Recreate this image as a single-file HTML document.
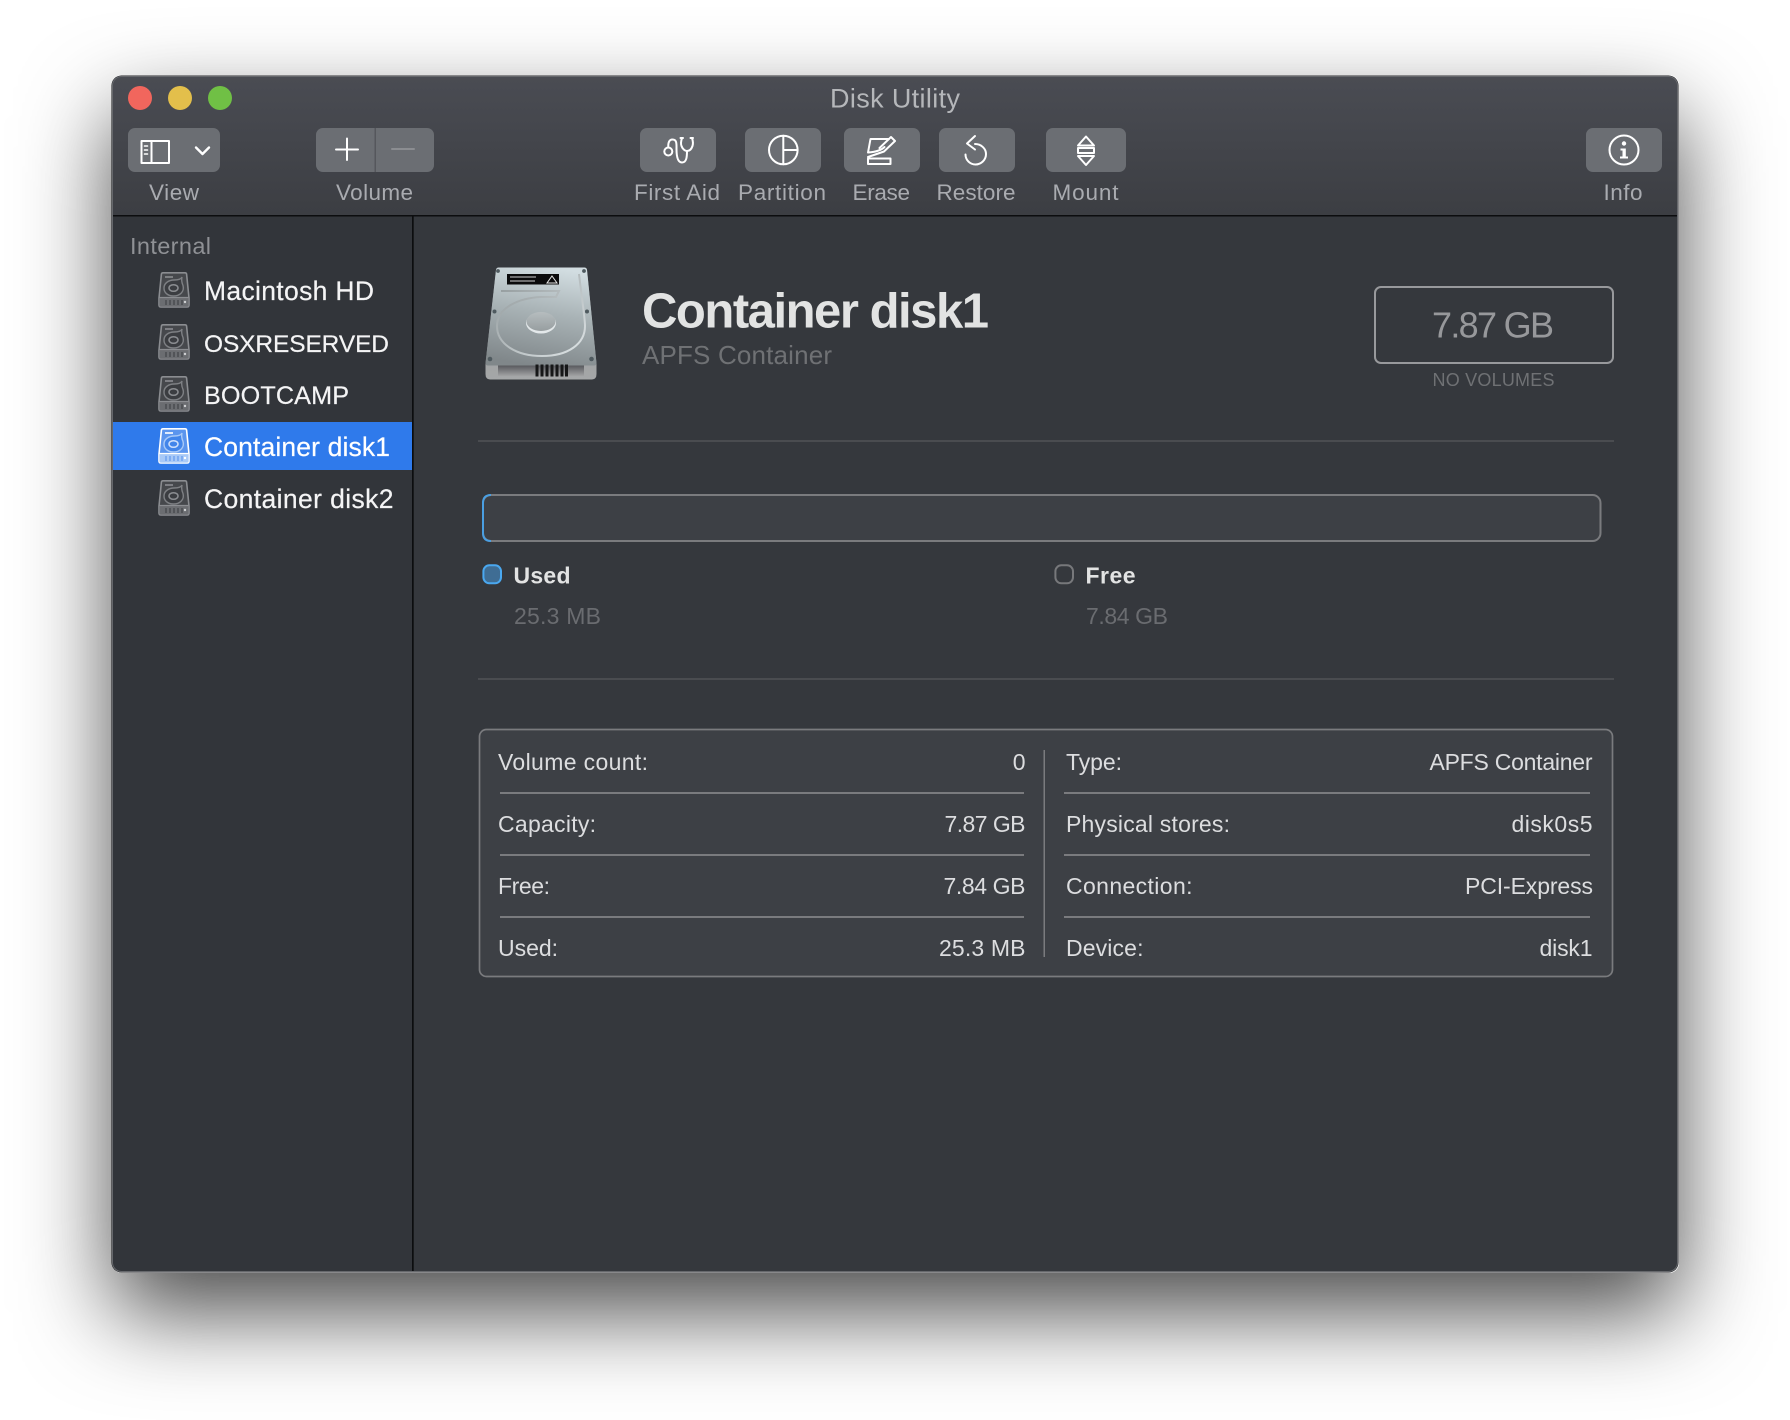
<!DOCTYPE html>
<html>
<head>
<meta charset="utf-8">
<title>Disk Utility</title>
<style>
html,body{margin:0;padding:0;background:#fff;width:1790px;height:1420px;overflow:hidden}
#sh{position:absolute;left:112px;top:75px;width:1567px;height:1198px;border-radius:10px;box-shadow:0 40px 90px rgba(0,0,0,.7)}
svg{position:absolute;left:0;top:0}
text{font-family:"Liberation Sans",sans-serif}
.tb{font-size:22.5px;fill:#a9abb0}
.side{font-size:26.5px;fill:#f4f4f5;stroke:#f4f4f5;stroke-width:.2}
.cell{font-size:23px;fill:#dcdddf}
.ic{fill:none;stroke:#fff;stroke-width:2;stroke-linejoin:round;stroke-linecap:round}
</style>
</head>
<body>
<div id="sh"></div>
<svg width="1790" height="1420" viewBox="0 0 1790 1420" xmlns="http://www.w3.org/2000/svg">
<defs>
<clipPath id="win"><rect x="112" y="76" width="1566" height="1196" rx="9"/></clipPath>
<linearGradient id="tg" x1="0" y1="0" x2="0" y2="1"><stop offset="0" stop-color="#4a4c53"/><stop offset="1" stop-color="#3c3e43"/></linearGradient>
<linearGradient id="hd" x1="0.6" y1="0" x2="0.4" y2="1"><stop offset="0" stop-color="#d2dde1"/><stop offset=".45" stop-color="#a9b3b6"/><stop offset="1" stop-color="#80878a"/></linearGradient>
<linearGradient id="hf" x1="0" y1="0" x2="0" y2="1"><stop offset="0" stop-color="#8f9192"/><stop offset="1" stop-color="#a5a7a8"/></linearGradient>
<linearGradient id="hr" x1="0" y1="0" x2="0" y2="1"><stop offset="0" stop-color="#55565a"/><stop offset="1" stop-color="#a2a3a4"/></linearGradient>
<linearGradient id="hh" x1="0" y1="0" x2="0" y2="1"><stop offset="0" stop-color="#b6bdbf"/><stop offset="1" stop-color="#979ea0"/></linearGradient>
<linearGradient id="hl" x1="0" y1="0" x2="1" y2="1"><stop offset="0" stop-color="#8d9597"/><stop offset="1" stop-color="#dfe5e7"/></linearGradient>
<symbol id="disk" viewBox="0 0 32 36" width="32" height="36" overflow="visible">
<path d="M3.4 2.2Q3.6 .8 5 .8H27Q28.4 .8 28.6 2.2L31 26V33Q31 35 29 35H3Q1 35 1 33V26Z" fill="#46484c" stroke="#8b8d91" stroke-width="1.6"/>
<path d="M1.4 25.5H30.6V33Q30.6 34.6 29 34.6H3Q1.4 34.6 1.4 33Z" fill="#6b6d71"/>
<path d="M1.4 25.5H30.6" stroke="#8b8d91" stroke-width="1.2"/>
<path d="M7 5H15" stroke="#8b8d91" stroke-width="1.6"/>
<path d="M24 5Q23 9 25 13.5C26.7 19.5 22 24 15.5 24C9.5 24 6 20.5 6 16C6 11 11 8 16 8C20 8 23 7.5 24 5Z" fill="#3b3d41" stroke="#7e8084" stroke-width="1.4"/>
<ellipse cx="15.5" cy="16" rx="4.5" ry="3.3" fill="none" stroke="#8b8d91" stroke-width="1.5"/>
<path d="M8 28V33M12 28V33M16 28V33M20 28V33M24 28V33" stroke="#3f4145" stroke-width="1.1"/>
<circle cx="27" cy="30" r="1.2" fill="#cfd0d2"/>
</symbol>
<symbol id="disks" viewBox="0 0 32 36" width="32" height="36" overflow="visible">
<path d="M3.4 2.2Q3.6 .8 5 .8H27Q28.4 .8 28.6 2.2L31 26V33Q31 35 29 35H3Q1 35 1 33V26Z" fill="#5b95ee" stroke="#fff" stroke-width="1.6"/>
<path d="M1.4 25.5H30.6V33Q30.6 34.6 29 34.6H3Q1.4 34.6 1.4 33Z" fill="#a8c9f7"/>
<path d="M1.4 25.5H30.6" stroke="#fff" stroke-width="1.2"/>
<path d="M7 5H15" stroke="#fff" stroke-width="1.6"/>
<path d="M24 5Q23 9 25 13.5C26.7 19.5 22 24 15.5 24C9.5 24 6 20.5 6 16C6 11 11 8 16 8C20 8 23 7.5 24 5Z" fill="#4285ea" stroke="#a8c9f7" stroke-width="1.4"/>
<ellipse cx="15.5" cy="16" rx="4.5" ry="3.3" fill="none" stroke="#cfe0fb" stroke-width="1.5"/>
<path d="M8 28V33M12 28V33M16 28V33M20 28V33M24 28V33" stroke="#5b95ee" stroke-width="1.1"/>
<circle cx="27" cy="30" r="1.2" fill="#fff"/>
</symbol>
</defs>

<rect x="111.5" y="75.5" width="1567" height="1197" rx="10" fill="#111214"/>
<g clip-path="url(#win)">
<rect x="112" y="76" width="1566" height="1196" fill="#35383d"/>
<rect x="112" y="216" width="300" height="1056" fill="#32353a"/>
<rect x="112" y="76" width="1566" height="139" fill="url(#tg)"/>
<rect x="112" y="215" width="1566" height="1.5" fill="#0c0d0f"/>
<rect x="412" y="216" width="1.7" height="1056" fill="#0c0d0f"/>
<rect x="112" y="422" width="300" height="48" fill="#2f7aeb"/>
</g>
<rect x="112.5" y="76.5" width="1565" height="1195" rx="9" fill="none" stroke="#66686c" stroke-width="1"/>

<!-- traffic lights -->
<circle cx="140" cy="98" r="12" fill="#f1665d"/>
<circle cx="180" cy="98" r="12" fill="#e3bf4b"/>
<circle cx="220" cy="98" r="12" fill="#70c045"/>
<text x="830" y="107.5" font-size="27" fill="#b5b7ba" textLength="130">Disk Utility</text>

<!-- toolbar buttons -->
<g fill="#6b6e73">
<rect x="128" y="128" width="92" height="44" rx="7"/>
<rect x="316" y="128" width="118" height="44" rx="7"/>
<rect x="640" y="128" width="76" height="44" rx="7"/>
<rect x="745" y="128" width="76" height="44" rx="7"/>
<rect x="844" y="128" width="76" height="44" rx="7"/>
<rect x="939" y="128" width="76" height="44" rx="7"/>
<rect x="1046" y="128" width="80" height="44" rx="7"/>
<rect x="1586" y="128" width="76" height="44" rx="7"/>
</g>
<rect x="374.5" y="128" width="1.5" height="44" fill="#55575c"/>

<!-- view -->
<g class="ic">
<rect x="141.5" y="141" width="27.5" height="22"/>
<path d="M151.5 141V163"/>
<path d="M144.5 146H147.5M144.5 150H147.5M144.5 154H147.5" stroke-width="1.6"/>
<path d="M196 147.5L202.5 154L209 147.5" stroke-width="2.4"/>
<path d="M347 138.5V160M336 149.5H358"/>
<path d="M392 149H414" stroke="#8b8d91"/>
<!-- first aid -->
<circle cx="668.3" cy="151.5" r="4"/>
<path d="M668.3 147.5C668 143 669 139.5 672.5 139.5C677 139.5 676.5 144 676.5 149C676.5 157 678 162.5 682 162.5C686.5 162.5 687 157 687 151"/>
<path d="M682 138C681 141 680.5 143.5 681.5 146C682.5 149 685 151 687 151C689.5 151 691.5 149 692.5 146C693.3 143.5 693 141 692 138"/>
<path d="M680.5 138H683M690.5 138H693"/>
<!-- partition -->
<circle cx="783.3" cy="150" r="14.3"/>
<path d="M783.3 135.7V164.3M783.3 150H797.6"/>
<!-- erase -->
<path d="M889 139H870.5L868 152.5C875 152 881 150.5 884.5 147"/>
<path d="M868 157L884 151.500L895 141L891 137L879.5 148"/>
<rect x="868" y="158.5" width="22.5" height="5.5"/>
<!-- restore -->
<path d="M975 144C981 144 986 148.5 986 154C986 160 981 164.5 975.5 164.5C970 164.5 965.500 160 965.500 154.500"/>
<path d="M975 136L967 143.5L975 149.500"/>
<!-- mount -->
<path d="M1086 136.500L1094 145.500H1078Z"/>
<rect x="1078" y="148" width="16" height="5"/>
<path d="M1086 165L1094 156H1078Z"/>
<!-- info -->
<circle cx="1624" cy="150" r="14.500"/>
</g>
<circle cx="1624" cy="143.500" r="2.200" fill="#fff"/>
<path d="M1620.500 148.500H1625.800V156.500H1628V158.500H1620V156.500H1622.500V150.500H1620.500Z" fill="#fff"/>

<g class="tb">
<text x="149" y="200" textLength="50">View</text>
<text x="336" y="200" textLength="77">Volume</text>
<text x="634" y="200" textLength="86">First Aid</text>
<text x="738" y="200" textLength="88">Partition</text>
<text x="852.500" y="200" textLength="57.500">Erase</text>
<text x="936.500" y="200" textLength="79">Restore</text>
<text x="1052.500" y="200" textLength="66">Mount</text>
<text x="1603.500" y="200" textLength="39">Info</text>
</g>

<!-- sidebar -->
<text x="130" y="254" font-size="23.500" fill="#8f9195" textLength="81">Internal</text>
<use href="#disk" x="158" y="272"/>
<use href="#disk" x="158" y="324"/>
<use href="#disk" x="158" y="376"/>
<use href="#disks" x="158" y="428"/>
<use href="#disk" x="158" y="480"/>
<g class="side">
<text x="204" y="300" textLength="170">Macintosh HD</text>
<text x="204" y="352" textLength="185" font-size="24.500">OSXRESERVED</text>
<text x="204" y="404" textLength="145" font-size="25.200">BOOTCAMP</text>
<text x="204" y="456" textLength="186" fill="#fff" stroke="#fff">Container disk1</text>
<text x="204" y="508" textLength="189.500">Container disk2</text>
</g>

<!-- hero icon -->
<path d="M496 270Q496.300 267.500 499 267.500H584Q586.700 267.500 587 270L596.500 364V374Q596.500 379.500 592 379.500H490Q485.500 379.500 485.500 374V364Z" fill="url(#hf)"/>
<path d="M498 365H584V376H498Z" fill="url(#hr)"/>
<path d="M496 270Q496.300 267.500 499 267.500H584Q586.700 267.500 587 270L596.500 363Q596.500 365.500 594 365.500H488Q485.500 365.500 485.500 363Z" fill="url(#hd)"/>
<path d="M501 291H559L556 297H541C520 298 497 307 497 326C497 344 516 356 542 356C568 356 585 344 585 326C585 318 582 300 579 274" fill="none" stroke="url(#hl)" stroke-width="2"/>
<rect x="507" y="274" width="52" height="10.500" fill="#0b0b0c"/>
<path d="M510 277H536M510 281H535" stroke="#a8a8a8" stroke-width="1.200"/>
<path d="M552 276L557 283H547Z" fill="none" stroke="#e8e8e8" stroke-width="1"/>
<ellipse cx="541" cy="323" rx="15" ry="10.500" fill="#e3e8ea"/>
<ellipse cx="541" cy="321.500" rx="14.500" ry="9.500" fill="url(#hh)"/>
<g fill="#4f5a5f">
<circle cx="498" cy="271" r="1.900"/><circle cx="584" cy="271" r="1.900"/>
<circle cx="494.500" cy="311.500" r="2"/><circle cx="587" cy="311.500" r="2"/>
<circle cx="490" cy="359" r="2.300"/><circle cx="591.500" cy="359" r="2.300"/>
</g>
<g fill="#161718"><rect x="535.500" y="364.500" width="3" height="12"/><rect x="540.500" y="364.500" width="3" height="12"/><rect x="545.500" y="364.500" width="3" height="12"/><rect x="550.500" y="364.500" width="3" height="12"/><rect x="555.500" y="364.500" width="3" height="12"/><rect x="560.500" y="364.500" width="3" height="12"/><rect x="565" y="364.500" width="3" height="12"/></g>

<text x="642" y="327.500" font-size="49" font-weight="700" fill="#e2e3e3" textLength="347">Container disk1</text>
<text x="642" y="364" font-size="26" fill="#6f7174" textLength="190">APFS Container</text>

<!-- capacity -->
<rect x="1375" y="287" width="238" height="76" rx="6" fill="none" stroke="#98999c" stroke-width="2"/>
<text x="1432" y="337.500" font-size="36" fill="#97989b" textLength="122">7.87 GB</text>
<text x="1432.500" y="386" font-size="18" fill="#6f7174" textLength="122">NO VOLUMES</text>

<rect x="478" y="440" width="1136" height="2" fill="#4a4c50"/>

<!-- bar -->
<rect x="483" y="495" width="1117.500" height="46" rx="8" fill="#3d4045" stroke="#7a7b7e" stroke-width="2"/>
<path d="M491 495Q483 495 483 503V533Q483 541 491 541" fill="none" stroke="#4a9fe2" stroke-width="2"/>

<!-- legend -->
<rect x="483.400" y="565.300" width="17.600" height="18" rx="6" fill="#3f6d94" stroke="#4aa8f0" stroke-width="2"/>
<text x="513.500" y="583.500" font-size="23" font-weight="700" fill="#e2e3e3" textLength="57">Used</text>
<text x="514" y="624" font-size="23" fill="#6a6c70" textLength="87">25.3 MB</text>
<rect x="1055.400" y="565.300" width="17.600" height="18" rx="6" fill="none" stroke="#77787b" stroke-width="2"/>
<text x="1085.500" y="583.500" font-size="23" font-weight="700" fill="#e2e3e3" textLength="50">Free</text>
<text x="1086" y="624" font-size="23" fill="#6a6c70" textLength="82">7.84 GB</text>

<rect x="478" y="678" width="1136" height="2" fill="#4a4c50"/>

<!-- table -->
<rect x="479.500" y="729.500" width="1133" height="247" rx="7" fill="#3d4045" stroke="#7a7b7e" stroke-width="1.700"/>
<g fill="#7a7b7e">
<rect x="500" y="792" width="524" height="2"/><rect x="500" y="854" width="524" height="2"/><rect x="500" y="916" width="524" height="2"/>
<rect x="1064" y="792" width="526" height="2"/><rect x="1064" y="854" width="526" height="2"/><rect x="1064" y="916" width="526" height="2"/>
<rect x="1043.500" y="750" width="1.500" height="207"/>
</g>
<g class="cell">
<text x="498" y="770" textLength="150">Volume count:</text>
<text x="498" y="832" textLength="98">Capacity:</text>
<text x="498" y="894" textLength="52">Free:</text>
<text x="498" y="956" textLength="60">Used:</text>
<text x="1025.500" y="770" text-anchor="end">0</text>
<text x="944.500" y="832" textLength="81">7.87 GB</text>
<text x="943.500" y="894" textLength="82">7.84 GB</text>
<text x="939" y="956" textLength="86.500">25.3 MB</text>
<text x="1066" y="770" textLength="56">Type:</text>
<text x="1066" y="832" textLength="164">Physical stores:</text>
<text x="1066" y="894" textLength="126.500">Connection:</text>
<text x="1066" y="956" textLength="77.500">Device:</text>
<text x="1429.500" y="770" textLength="163">APFS Container</text>
<text x="1511.500" y="832" textLength="81">disk0s5</text>
<text x="1465" y="894" textLength="128">PCI-Express</text>
<text x="1539.500" y="956" textLength="53">disk1</text>
</g>
</svg>
</body>
</html>
